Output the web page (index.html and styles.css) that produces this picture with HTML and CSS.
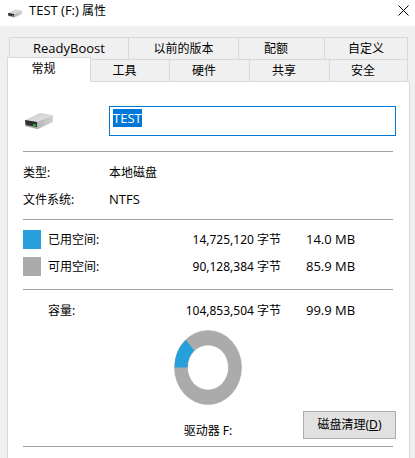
FILE: index.html
```html
<!DOCTYPE html>
<html lang="zh-CN">
  <head>
    <meta charset="UTF-8" />
    <meta name="viewport" content="width=device-width, initial-scale=1.0" />
    <title>TEST (F:) 属性</title>
    <link rel="stylesheet" href="styles.css">
  </head>
  <body>
    <svg class="symbols" aria-hidden="true">
      <defs>
        <linearGradient id="top" x1="0" y1="0" x2="1" y2="1">
          <stop offset="0" stop-color="#cbccce" />
          <stop offset="1" stop-color="#e4e5e7" />
        </linearGradient>
        <linearGradient id="side" x1="0" y1="0" x2="1" y2="0">
          <stop offset="0" stop-color="#b4b4b6" />
          <stop offset="1" stop-color="#d2d2d4" />
        </linearGradient>
      </defs>
      <symbol id="drive" viewBox="0 0 30 18">
        <path d="M0 8 L15 1 L28 3 L12 10 Z" fill="url(#top)" />
        <path d="M12 10 L28 3 V10 L13 17 H12 Z" fill="url(#side)" />
        <path d="M0 8 L12 10 V17 L0 14 Z" fill="#a4a4a6" />
        <path d="M0 8 L12 10 V15 L1 13 Z" fill="#2d2f2e" />
        <path d="M8 12 L11 12.5 V14.5 L8 14 Z" fill="#2fae3a" />
      </symbol>
    </svg>

    <header class="titlebar">
      <svg class="titlebar-icon" aria-hidden="true"><use href="#drive" /></svg>
      <h1><span class="latin">TEST (F:)</span> 属性</h1>
      <button class="close" type="button" aria-label="关闭">
        <svg width="11" height="11" viewBox="0 0 11 11"><path d="M.5 .5 L10.5 10.5 M10.5 .5 L.5 10.5" /></svg>
      </button>
    </header>

    <main class="dialog">
      <div class="tabs" role="tablist">
        <div class="tab-row back">
          <button class="tab latin" type="button" role="tab">ReadyBoost</button>
          <button class="tab" type="button" role="tab">以前的版本</button>
          <button class="tab short" type="button" role="tab">配额</button>
          <button class="tab" type="button" role="tab">自定义</button>
        </div>
        <div class="tab-row front">
          <button class="tab short active" type="button" role="tab" aria-selected="true">常规</button>
          <button class="tab short" type="button" role="tab">工具</button>
          <button class="tab short" type="button" role="tab">硬件</button>
          <button class="tab short" type="button" role="tab">共享</button>
          <button class="tab short" type="button" role="tab">安全</button>
        </div>
      </div>

      <section class="panel" role="tabpanel">
        <div class="volume">
          <svg class="volume-icon" aria-hidden="true"><use href="#drive" /></svg>
          <input class="latin" type="text" id="label" value="TEST" aria-label="卷标" spellcheck="false" />
        </div>
        <hr />
        <table class="details">
          <tr><th scope="row">类型:</th><td>本地磁盘</td></tr>
          <tr><th scope="row">文件系统:</th><td class="latin">NTFS</td></tr>
        </table>
        <hr />
        <table class="space">
          <tr>
            <td class="key"><span class="swatch used"></span></td>
            <th scope="row">已用空间:</th>
            <td class="bytes">14,725,120 字节</td>
            <td class="size latin">14.0 MB</td>
          </tr>
          <tr>
            <td class="key"><span class="swatch free"></span></td>
            <th scope="row">可用空间:</th>
            <td class="bytes">90,128,384 字节</td>
            <td class="size latin">85.9 MB</td>
          </tr>
        </table>
        <hr />
        <table class="space total">
          <tr>
            <td class="key"></td>
            <th scope="row">容量:</th>
            <td class="bytes">104,853,504 字节</td>
            <td class="size latin">99.9 MB</td>
          </tr>
        </table>

        <div class="usage">
          <figure>
            <svg width="68" height="75" viewBox="0 0 68 75" aria-hidden="true">
              <path fill="#ababab" stroke="#a0a0a0" stroke-width=".5" fill-rule="evenodd" d="M.5 37.5 A33.5 37 0 1 1 67.5 37.5 A33.5 37 0 1 1 .5 37.5 Z M13.5 37.5 A20.5 22.5 0 1 0 54.5 37.5 A20.5 22.5 0 1 0 13.5 37.5 Z" />
              <path fill="#26a0da" d="M.5 37.5 A33.5 37 0 0 1 11.8 9.8 L20.2 20.6 A20.5 22.5 0 0 0 13.5 37.5 Z" />
            </svg>
            <figcaption>驱动器 F:</figcaption>
          </figure>
          <button class="cleanup" type="button" accesskey="d">磁盘清理(<u>D</u>)</button>
        </div>
        <hr />
      </section>
    </main>

    <script>
      document.querySelector("#label").select();
    </script>
  </body>
</html>
```
FILE: styles.css
```css
* {
  box-sizing: border-box;
}

body {
  display: flex;
  flex-direction: column;
  min-height: 100vh;
  margin: 0;
  background: #f0f0f0;
  color: #000000;
  font: 12px/16px "Noto Sans", "Noto Sans CJK SC", sans-serif;
}

button,
input {
  font: inherit;
  color: inherit;
  border-radius: 0;
}

.latin {
  font-size: 13px;
  font-family: "Open Sans", sans-serif;
}

.symbols {
  position: absolute;
  width: 0;
  height: 0;
}

/* title bar */
.titlebar {
  display: flex;
  align-items: flex-start;
  height: 26px;
  padding: 2px 6px 0 8px;
  background: #ffffff;
}
.titlebar h1 {
  flex: 1;
  margin: 0 0 0 6px;
  font-size: 12px;
  font-weight: normal;
}
.titlebar-icon {
  width: 15px;
  height: 9px;
  margin-top: 7px;
}
.close {
  display: flex;
  padding: 3px 0;
  border: 0;
  background: none;
}
.close path {
  stroke: #000000;
  fill: none;
}

/* tabs */
.dialog {
  flex: 1;
  display: flex;
  flex-direction: column;
  padding: 11px 5px 0 7px;
}
.tab-row {
  display: grid;
}
.tab-row.back {
  grid-template-columns: 119fr 110fr 86fr 84fr;
  height: 22px;
  margin: 0 2px;
}
.tab-row.front {
  grid-template-columns: 84fr 78fr 80fr 80fr 79fr;
  height: 22px;
  margin-right: 2px;
}
.tab {
  padding: 0;
  border: 1px solid #d9d9d9;
  border-width: 1px 0 0 1px;
  background: #f0f0f0;
}
.tab:last-child {
  border-right-width: 1px;
}
.tab.short {
  padding-right: 11px;
}
.tab.latin {
  padding-bottom: 2px;
}
.tab.active {
  position: relative;
  margin: -2px 0 -1px;
  padding-bottom: 2px;
  border-right-width: 1px;
  background: #ffffff;
}
.tab.active + .tab {
  border-left-width: 0;
}

/* page of the selected tab */
.panel {
  flex: 1;
  padding: 24px 13px 0 15px;
  border: 1px solid #d9d9d9;
  border-bottom: 0;
  background: #ffffff;
}
hr {
  height: 1px;
  margin: 0 3px 0 0;
  border: 0;
  background: #a0a0a0;
}
.volume {
  display: flex;
  align-items: center;
  margin-bottom: 15px;
}
.volume-icon {
  width: 30px;
  height: 18px;
  margin: 0 54px 0 2px;
}
.volume input {
  flex: 1;
  min-width: 0;
  height: 30px;
  padding: 2px 3px 9px;
  border: 1px solid #0078d7;
  outline: 0;
}
.volume input::selection {
  background: #0078d7;
  color: #ffffff;
}

table {
  width: 100%;
  border-collapse: collapse;
}
tr {
  height: 27px;
}
th,
td {
  padding: 0;
  font-weight: normal;
  text-align: left;
}
td.latin {
  padding-bottom: 2px;
}
.details {
  margin: 7px 0 6px;
}
.details th {
  width: 86px;
}
.space {
  margin: 6px 0 9px;
}
.space.total {
  margin: 7px 0 6px;
}
.space .key {
  width: 25px;
}
.space th {
  width: 80px;
}
.space .bytes {
  width: 153px;
  text-align: right;
}
.space .size {
  padding-left: 25px;
}
.swatch {
  display: block;
  width: 18px;
  height: 19px;
}
.swatch.used {
  background: #26a0da;
}
.swatch.free {
  background: #ababab;
}

/* chart and clean-up button */
.usage {
  display: grid;
  grid-template-columns: 1fr auto 1fr;
  align-items: end;
  margin-right: 3px;
  padding-bottom: 7px;
}
.usage figure {
  grid-column: 2;
  display: flex;
  flex-direction: column;
  align-items: center;
  gap: 18px;
  margin: 0;
}
.cleanup {
  justify-self: end;
  min-width: 93px;
  height: 28px;
  margin-right: -3px;
  padding: 0 12px;
  border: 1px solid #adadad;
  background: #e1e1e1;
}
```
